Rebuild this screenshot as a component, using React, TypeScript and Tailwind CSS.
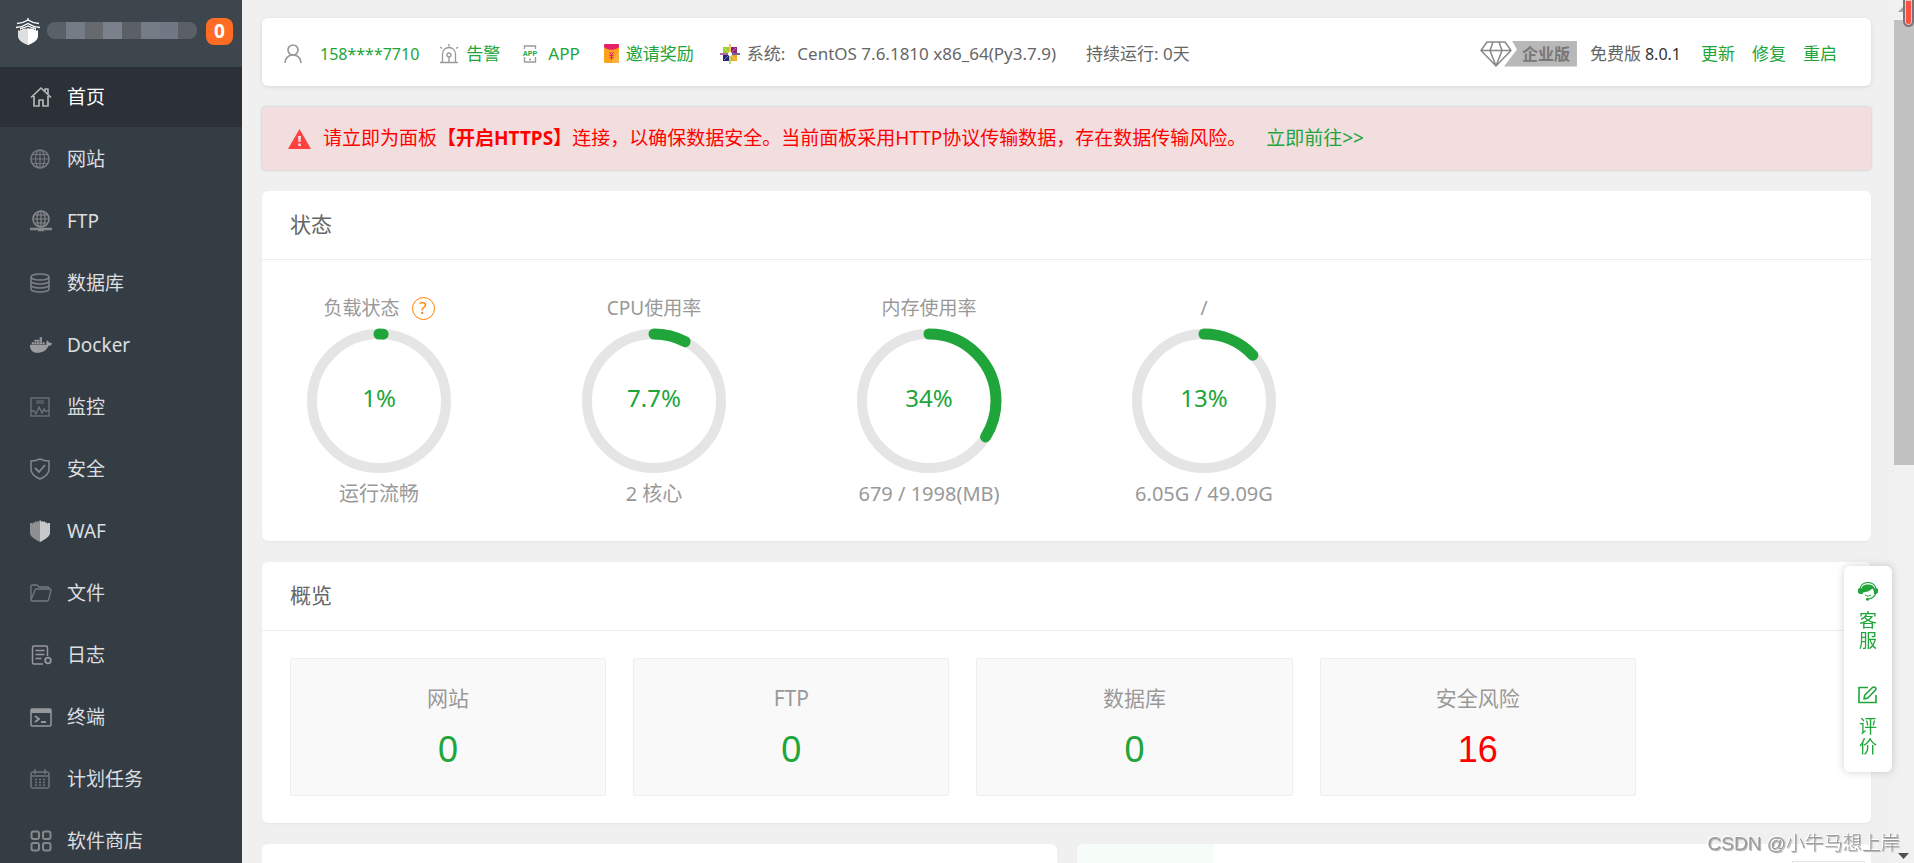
import type { ReactNode } from 'react'
import { FaDocker } from 'react-icons/fa'

const line = { fill: 'none', stroke: 'currentColor', strokeWidth: 1.5 } as const

const HomeIcon = () => (
  <svg width="22" height="22" viewBox="0 0 22 22" {...line} strokeWidth={1.7}>
    <path d="M1 11.5 11 2l10 9.5M15 5V3h3v5M4 10v10h5v-6h4v6h5V10" strokeLinejoin="round" />
  </svg>
)

const GlobeIcon = () => (
  <svg width="20" height="20" viewBox="0 0 20 20" {...line} strokeWidth={1.2}>
    <circle cx="10" cy="10" r="9" strokeWidth={1.6} />
    <ellipse cx="10" cy="10" rx="4.5" ry="9" />
    <path d="M1 10h18M10 1v18M2.5 5.5h15M2.5 14.5h15" />
  </svg>
)

const FtpIcon = () => (
  <svg width="22" height="22" viewBox="0 0 22 22" {...line} strokeWidth={1.2}>
    <circle cx="11" cy="9" r="8" strokeWidth={1.6} />
    <ellipse cx="11" cy="9" rx="4" ry="8" />
    <path d="M3 9h16M11 1v16M4.5 5h13M4.5 13h13" />
    <path d="M0 19h22M8 20h6" strokeWidth={2.4} />
  </svg>
)

const DatabaseIcon = () => (
  <svg width="20" height="20" viewBox="0 0 20 20" {...line}>
    <ellipse cx="10" cy="4" rx="9" ry="3" />
    <path d="M1 4v12c0 1.7 4 3 9 3s9-1.3 9-3V4M1 8c0 1.7 4 3 9 3s9-1.3 9-3M1 12c0 1.7 4 3 9 3s9-1.3 9-3" />
  </svg>
)

const MonitorIcon = () => (
  <svg width="20" height="20" viewBox="0 0 20 20" {...line} strokeWidth={1.3}>
    <rect x="1" y="1" width="18" height="18" />
    <rect x="6" y="3" width="8" height="4" fill="currentColor" stroke="none" opacity=".5" />
    <path d="M1 14h3l2 3 3-7 3 6 2-4 1 2h4" />
  </svg>
)

const SafeIcon = () => (
  <svg width="20" height="22" viewBox="0 0 20 22" {...line}>
    <path d="M10 1c3 1.5 6 2 9 2v8c0 5-4 8-9 10-5-2-9-5-9-10V3c3 0 6-.5 9-2z" />
    <path d="m5 10 4 4 6-7" strokeWidth={1.8} />
  </svg>
)

const WafIcon = () => (
  <svg width="20" height="22" viewBox="0 0 20 22">
    <path d="M10 0v22C4 19 0 16 0 13V3h2v1l2-2v1l2-2v1l2-1v1z" fill="#8d8f91" />
    <path d="M10 0v22c6-3 10-6 10-9V3h-2v1l-2-2v1l-2-2v1l-2-1v1z" fill="#c6c8c9" />
  </svg>
)

const FolderIcon = () => (
  <svg width="22" height="18" viewBox="0 0 22 18" {...line} strokeWidth={1.3} strokeLinejoin="round">
    <path d="M1 16V2q0-1 1-1h5l2 2h9q1 0 1 1v1M1 16 5 6q.4-1 1.5-1H20q1.2 0 1 1l-2.5 10q-.3 1-1.5 1H2q-1 0-1-1z" />
  </svg>
)

const LogIcon = () => (
  <svg width="22" height="20" viewBox="0 0 22 20" {...line}>
    <path d="M13 19H4q-1.5 0-1.5-1.5v-15Q2.5 1 4 1h12q1.5 0 1.5 1.5V11M5.5 5.5h9M5.5 9.5h9M5.5 13.5h6" />
    <circle cx="18" cy="15.5" r="2.8" strokeWidth={1.8} />
  </svg>
)

const TerminalIcon = () => (
  <svg width="22" height="19" viewBox="0 0 22 19" {...line}>
    <rect x="1" y="1" width="20" height="17" rx="1" />
    <path d="M1 3h20" strokeWidth={4} />
    <path d="m5 8 4 3-4 3M11 14h5" strokeWidth={1.8} />
  </svg>
)

const CalendarIcon = () => (
  <svg width="20" height="20" viewBox="0 0 20 20" {...line}>
    <rect x="1" y="3" width="18" height="16" rx="2" />
    <path d="M1 7h18M5 0v5M15 0v5" />
    <path d="M5 10.5h11M5 13.5h11M5 16.3h11" strokeDasharray="2 2" strokeWidth={1.6} />
  </svg>
)

const AppsIcon = () => (
  <svg width="22" height="22" viewBox="0 0 22 22" {...line} strokeWidth={2}>
    <rect x="1.5" y="1.5" width="7.5" height="7.5" rx="2" />
    <rect x="13" y="1.5" width="7.5" height="7.5" rx="2" />
    <rect x="1.5" y="13" width="7.5" height="7.5" rx="2" />
    <rect x="13" y="13" width="7.5" height="7.5" rx="2" />
  </svg>
)

const LogoIcon = () => (
  <svg width="26" height="28" viewBox="0 0 26 28" fill="none">
    <path d="M2 5.5C7 5 10 4 13 2c3 2 6 3 11 3.5M1 9.500C6 9 10 7.500 13 5.500c3 2 7 3.500 12 4" stroke="#fff" strokeWidth="1.5" />
    <path d="M13 0v3M5 10.5C8 10 11 9 13 8c2 1 5 2 8 2.5" stroke="#fff" strokeWidth="1.3" />
    <path d="M13 10v17c-6-2-10-5-10-9v-6l2 1v-2l2 1v-2l2 1 1-1 1 1z" fill="#dfdfdf" />
    <path d="M13 10v17c6-2 10-5 10-9v-6l-2 1v-2l-2 1v-2l-2 1-1-1-1 1z" fill="#fff" />
  </svg>
)

const UserIcon = () => (
  <svg width="18" height="20" viewBox="0 0 18 20" {...line} strokeWidth={1.7}>
    <circle cx="9" cy="6" r="5" />
    <path d="M1 19c0-5 3.5-8 8-8s8 3 8 8" />
  </svg>
)

const AlarmIcon = () => (
  <svg width="20" height="20" viewBox="0 0 20 20" {...line} strokeWidth={1.3}>
    <path d="M3.5 18.5V10a6.5 6.5 0 0 1 13 0v8.5M1 18.5h18M10 13v5.5M10 0v2.5M1 3l2 1.5M19 3l-2 1.5" />
    <circle cx="10" cy="11" r="2" />
  </svg>
)

const PhoneIcon = () => (
  <svg width="16" height="18" viewBox="0 0 16 18" {...line} strokeWidth={1.3}>
    <path d="M2.5 4V1h11v3M2.5 12v5h11v-5M7 14.5h2" />
    <text x="8" y="10.5" textAnchor="middle" fontSize="7" fontWeight="700" fill="#20a53a" stroke="none" fontFamily="Liberation Sans, sans-serif">APP</text>
  </svg>
)

const RedPacketIcon = () => (
  <svg width="15" height="19" viewBox="0 0 15 19">
    <rect width="15" height="19" rx="1.5" fill="#faa21b" />
    <path d="M15 6v12q0 1-1 1H7z" fill="#fbb040" />
    <path d="M0 3V1q0-1 1-1h13q1 0 1 1v2c-3 3.5-12 3.5-15 0z" fill="#e6206b" />
    <path d="m5.5 8 2 3 2-3M5.5 11.5h4M5.5 13.5h4M7.5 11v5" stroke="#e6206b" strokeWidth="1" fill="none" />
  </svg>
)

const CentosIcon = () => (
  <svg width="20" height="20" viewBox="0 0 20 20">
    <path d="M3 3h6v6H3z" fill="#9ccd2a" />
    <path d="M11 3h6v6h-6z" fill="#932279" />
    <path d="M3 11h6v6H3z" fill="#262577" />
    <path d="M11 11h6v6h-6z" fill="#efa724" />
    <path d="m4 4 5 5M16 4l-5 5M4 16l5-5M16 16l-5-5" stroke="#fff" strokeWidth=".4" />
    <path d="M10 0v8" stroke="#efa724" strokeWidth="1.4" />
    <path d="M10 12v8" stroke="#9ccd2a" strokeWidth="1.4" />
    <path d="M0 10h8" stroke="#932279" strokeWidth="1.4" />
    <path d="M12 10h8" stroke="#262577" strokeWidth="1.4" />
  </svg>
)

const DiamondIcon = () => (
  <svg width="32" height="26" viewBox="0 0 32 26" fill="none" stroke="#888" strokeWidth="1.5" strokeLinejoin="round">
    <path d="M7 1h18l6 8.5L16 25 1 9.5zM1 9.5h30M13 1l-3 8.5L16 25l6-15.5L19 1" />
  </svg>
)

const WarnIcon = () => (
  <svg width="23" height="20" viewBox="0 0 23 20">
    <path d="M11.5 0 23 20H0z" fill="#ff4040" />
    <path d="M10 7h3l-.5 6h-2zM10.2 14.5h2.6V17h-2.6z" fill="#f2dede" />
  </svg>
)

const ServiceIcon = () => (
  <svg width="20" height="19" viewBox="0 0 20 19" fill="none">
    <path d="M2 7a8 6.5 0 0 1 16 0M18 11q-2 5.5-8 6" stroke="#20a53a" strokeWidth="1.2" />
    <path d="M0 7q2-1.5 4 0v5q-4 0-4-2zM20 7q-2-1.5-4 0v5q4 0 4-2z" fill="#20a53a" />
    <path d="M3 11C2 5 5.5 2.5 10 2.5S18 5 17 11h-1q0-3-1.5-4.5Q11 10 5 10.5V12z" fill="#20a53a" />
    <path d="M7 13q3 2.5 6 0" stroke="#20a53a" />
    <circle cx="9.5" cy="17.3" r="1.5" fill="#20a53a" />
  </svg>
)

const EditIcon = () => (
  <svg width="20" height="18" viewBox="0 0 20 18" fill="none" stroke="#20a53a" strokeWidth="1.6">
    <path d="M10 1.5H1v15h17V9" />
    <path d="m6 13 .8-4L14.5 1.5q1.5-1 2.8 0 1.2 1.3 0 2.7L9.8 12z" strokeLinejoin="round" />
  </svg>
)

const MENU: { label: string; icon: ReactNode; tone?: string }[] = [
  { label: '首页', icon: <HomeIcon />, tone: 'text-[#b5b7b9]' },
  { label: '网站', icon: <GlobeIcon />, tone: 'text-[#75797d]' },
  { label: 'FTP', icon: <FtpIcon />, tone: 'text-[#85888b]' },
  { label: '数据库', icon: <DatabaseIcon /> },
  { label: 'Docker', icon: <FaDocker size={22} />, tone: 'text-[#9b9d9f]' },
  { label: '监控', icon: <MonitorIcon />, tone: 'text-[#6f7478]' },
  { label: '安全', icon: <SafeIcon />, tone: 'text-[#85888b]' },
  { label: 'WAF', icon: <WafIcon /> },
  { label: '文件', icon: <FolderIcon />, tone: 'text-[#75797d]' },
  { label: '日志', icon: <LogIcon />, tone: 'text-[#96989a]' },
  { label: '终端', icon: <TerminalIcon />, tone: 'text-[#96989a]' },
  { label: '计划任务', icon: <CalendarIcon />, tone: 'text-[#6f7478]' },
  { label: '软件商店', icon: <AppsIcon />, tone: 'text-[#85888b]' },
]

const GAUGES = [
  { title: '负载状态', percent: 1, foot: '运行流畅', help: true },
  { title: 'CPU使用率', percent: 7.7, foot: '2 核心' },
  { title: '内存使用率', percent: 34, foot: '679 / 1998(MB)' },
  { title: '/', percent: 13, foot: '6.05G / 49.09G' },
]

const COUNTS = [
  { title: '网站', value: 0 },
  { title: 'FTP', value: 0 },
  { title: '数据库', value: 0 },
  { title: '安全风险', value: 16, danger: true },
]

// blurred-out server address
const MASK = ['bg-[#5a6067]', 'bg-[#757c86]', 'bg-[#666a6e]', 'bg-[#7a818b]', 'bg-[#5b5f66]', 'bg-[#757c86]', 'bg-[#717883]', 'bg-[#5b6067]']

function Sidebar() {
  return (
    <aside className="w-[242px] shrink-0 bg-[#353d44]">
      <div className="flex h-[67px] items-start bg-[#3d464d] pt-[18px] pl-[15px] pr-[9px]">
        <LogoIcon />
        <div className="mt-1 ml-[6px] flex h-[17px] flex-1 overflow-hidden rounded-lg">
          {MASK.map((c, i) => <span key={i} className={`flex-1 ${c}`} />)}
        </div>
        <span className="ml-[9px] flex size-[27px] items-center justify-center rounded-lg bg-[#ff6c23] text-[19px] font-bold text-white">0</span>
      </div>
      <nav className="flex flex-col gap-[2px]">
        {MENU.map((m, i) => (
          <a
            key={m.label}
            href="#"
            className={`flex h-[60px] items-center pl-[30px] text-[19px] ${i === 0 ? 'bg-[#2c3138] text-white' : 'text-[#dcdee0]'}`}
          >
            <span className={`flex w-[37px] ${m.tone ?? 'text-[#7d8184]'}`}>{m.icon}</span>
            {m.label}
          </a>
        ))}
      </nav>
    </aside>
  )
}

function TopBar() {
  return (
    <header className="flex h-[68px] items-center rounded-md bg-white pt-[3px] pl-[22px] pr-[34px] text-[17px] whitespace-nowrap text-[#666] shadow-[0_1px_4px_rgba(0,0,0,0.1)]">
      <span className="mr-[18px] text-[#999]"><UserIcon /></span>
      <a href="#" className="mr-5 text-[16px] text-[#20a53a]">158****7710</a>
      <a href="#" className="mr-[22px] flex items-center gap-[7px] text-[#20a53a]">
        <span className="text-[#999]"><AlarmIcon /></span>告警
      </a>
      <a href="#" className="mr-6 flex items-center gap-[10px] text-[#20a53a]">
        <span className="text-[#999]"><PhoneIcon /></span>APP
      </a>
      <a href="#" className="mr-[26px] flex items-center gap-[7px] text-[#20a53a]"><RedPacketIcon />邀请奖励</a>
      <span className="mr-[7px]"><CentosIcon /></span>
      <span className="mr-3">系统:</span>
      <span className="mr-[30px]">CentOS 7.6.1810 x86_64(Py3.7.9)</span>
      <span>持续运行: 0天</span>

      <div className="ml-auto flex items-center">
        <button type="button" className="mr-[13px] flex h-[26px] items-center">
          <DiamondIcon />
          <span className="-ml-2 h-[26px] bg-[#b8b8b8] pr-[7px] pl-[18px] text-[16px] leading-[26px] font-bold text-[#777] [clip-path:polygon(8px_0,13px_9px,0_26px,100%_26px,100%_0)]">企业版</span>
        </button>
        <span className="mr-1">免费版</span>
        <span className="mr-5 text-[16px] text-[#333]">8.0.1</span>
        <div className="flex gap-[17px] text-[#20a53a]">
          <a href="#">更新</a>
          <a href="#">修复</a>
          <a href="#">重启</a>
        </div>
      </div>
    </header>
  )
}

function Gauge({ title, percent, foot, help }: { title: string; percent: number; foot: string; help?: boolean }) {
  return (
    <div className="flex w-[146px] flex-col items-center text-[19px] whitespace-nowrap text-[#999]">
      <div className="flex h-7 items-center gap-3">
        {title}
        {help && (
          <button type="button" className="flex size-[23px] items-center justify-center rounded-full border border-[#ff7f00] text-[17px] text-[#ff7f00]">?</button>
        )}
      </div>
      <div className="relative my-[6px]">
        <svg width="146" height="146" viewBox="0 0 146 146" fill="none">
          <circle cx="73" cy="73" r="67" stroke="#e5e5e5" strokeWidth="10" />
          <circle
            cx="73" cy="73" r="67" stroke="#20a53a" strokeWidth="11" strokeLinecap="round"
            pathLength="100" strokeDasharray={`${percent} 100`} transform="rotate(-90 73 73)"
          />
        </svg>
        <span className="absolute inset-0 flex items-center justify-center pb-[6px] text-[24px] text-[#20a53a]">{percent}%</span>
      </div>
      <div className="h-7 text-[20px] leading-7">{foot}</div>
    </div>
  )
}

function Panel({ title, children }: { title: string; children: ReactNode }) {
  return (
    <section className="rounded-md bg-white shadow-[0_1px_2px_rgba(0,0,0,0.05)]">
      <h2 className="flex h-[69px] items-center border-b border-[#ededed] px-7 text-[21px] text-[#666]">{title}</h2>
      {children}
    </section>
  )
}

export default function App() {
  return (
    <div className="flex h-screen overflow-hidden bg-[#f0f0f0] font-['Noto_Sans','Noto_Sans_CJK_SC',sans-serif]">
      <Sidebar />

      <main className="flex min-w-0 flex-1 flex-col gap-[21px] overflow-hidden pt-[18px] pr-[23px] pl-5 *:shrink-0">
        <TopBar />

        <div className="flex h-[63px] items-center rounded-sm bg-[#f2dede] pl-[26px] text-[19px] whitespace-nowrap text-[#f00] shadow-[0_0_3px_rgba(0,0,0,0.2)]">
          <WarnIcon />
          <p className="ml-3">
            请立即为面板<b>【开启HTTPS】</b>连接，以确保数据安全。当前面板采用HTTP协议传输数据，存在数据传输风险。
          </p>
          <a href="#" className="ml-5 text-[#20a53a]">立即前往&gt;&gt;</a>
        </div>

        <Panel title="状态">
          <div className="flex gap-[129px] pt-[34px] pr-7 pb-[33px] pl-11">
            {GAUGES.map(g => <Gauge key={g.title} {...g} />)}
          </div>
        </Panel>

        <Panel title="概览">
          <div className="px-7 pt-[27px] pb-[27px]">
            <div className="grid w-13/15 grid-cols-4 gap-[27px]">
              {COUNTS.map(c => (
                <div key={c.title} className="flex h-[138px] flex-col items-center rounded-xs border border-[#eee] bg-[#f9f9f9] pt-[21px]">
                  <div className="h-9 text-[21px] leading-9 text-[#999]">{c.title}</div>
                  <a
                    href="#"
                    className={`mt-[10px] font-['Liberation_Sans',sans-serif] text-[36px] leading-12 ${c.danger ? 'text-[#f00]' : 'text-[#20a53a]'}`}
                  >
                    {c.value}
                  </a>
                </div>
              ))}
            </div>
          </div>
        </Panel>

        <div className="grid grid-cols-2 gap-5">
          <section className="h-[120px] rounded-md bg-white" />
          <section className="flex h-[120px] items-start justify-between overflow-hidden rounded-md bg-white pr-[6px]">
            <div className="h-[68px] w-[137px] bg-[#f6fcf8]" />
            <div className="mt-[17px] h-9 w-[73px] border border-[#e5e5e5]" />
          </section>
        </div>
      </main>

      <div className="flex w-5 shrink-0 flex-col items-center bg-[#f1f1f1]">
        <svg width="20" height="20" viewBox="0 0 20 20"><path d="m4 12 5-5 5 5z" fill="#a3a3a3" /></svg>
        <div className="h-[445px] w-full bg-[#c1c1c1]" />
        <svg className="mt-auto" width="20" height="20" viewBox="0 0 20 20"><path d="m4 10 5.5 6 5.5-6z" fill="#505050" /></svg>
      </div>

      <div className="fixed top-0 right-0 h-[27px] w-[11px] rounded-b-full border-2 border-t-0 border-[#777] bg-[#ff4f42] shadow-[inset_0_0_0_1px_#e8c8c4]" />

      <div className="fixed right-[22px] bottom-[91px] flex h-[206px] w-12 flex-col items-center rounded-md bg-white text-[18px] leading-5 text-[#20a53a] shadow-[0_0_8px_rgba(0,0,0,0.18)]">
        <button type="button" className="flex w-full flex-col items-center pt-4">
          <ServiceIcon />
          <span className="mt-[9px] w-[18px]">客服</span>
        </button>
        <button type="button" className="mt-9 flex w-full flex-col items-center">
          <EditIcon />
          <span className="mt-3 w-[18px]">评价</span>
        </button>
      </div>

      <div className="fixed right-[14px] bottom-[5px] font-['Liberation_Sans','Noto_Sans_CJK_SC',sans-serif] text-[19px] font-light text-[#999] [text-shadow:-1px_-1px_0_#fff,1px_1px_1px_#aaa]">
        CSDN @小牛马想上岸
      </div>
    </div>
  )
}
